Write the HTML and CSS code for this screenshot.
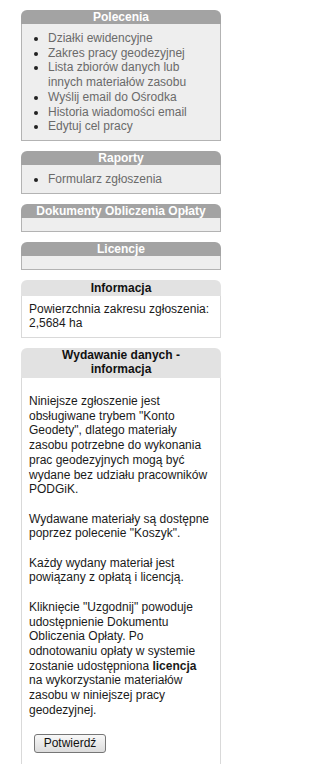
FILE: index.html
```html
<!DOCTYPE html>
<html lang="pl">
<head>
<meta charset="utf-8">
<title>Panel</title>
<link rel="stylesheet" href="styles.css">
</head>
<body>
<div class="sidebar">
  <div class="box">
    <div class="box-head">Polecenia</div>
    <div class="box-body">
      <ul class="menu">
        <li><a href="#">Działki ewidencyjne</a></li>
        <li><a href="#">Zakres pracy geodezyjnej</a></li>
        <li><a href="#">Lista zbiorów danych lub innych materiałów zasobu</a></li>
        <li><a href="#">Wyślij email do Ośrodka</a></li>
        <li><a href="#">Historia wiadomości email</a></li>
        <li><a href="#">Edytuj cel pracy</a></li>
      </ul>
    </div>
  </div>

  <div class="box">
    <div class="box-head">Raporty</div>
    <div class="box-body">
      <ul class="menu">
        <li><a href="#">Formularz zgłoszenia</a></li>
      </ul>
    </div>
  </div>

  <div class="box">
    <div class="box-head">Dokumenty Obliczenia Opłaty</div>
    <div class="box-body empty"></div>
  </div>

  <div class="box">
    <div class="box-head">Licencje</div>
    <div class="box-body empty"></div>
  </div>

  <div class="box info">
    <div class="info-head">Informacja</div>
    <div class="info-body">Powierzchnia zakresu zgłoszenia: 2,5684 ha</div>
  </div>

  <div class="box info">
    <div class="info-head wide">Wydawanie danych - informacja</div>
    <div class="info-body long">
      <p>Niniejsze zgłoszenie jest obsługiwane trybem "Konto Geodety", dlatego materiały zasobu potrzebne do wykonania prac geodezyjnych mogą być wydane bez udziału pracowników PODGiK.</p>
      <p>Wydawane materiały są dostępne poprzez polecenie "Koszyk".</p>
      <p>Każdy wydany materiał jest powiązany z opłatą i licencją.</p>
      <p>Kliknięcie "Uzgodnij" powoduje udostępnienie Dokumentu Obliczenia Opłaty. Po odnotowaniu opłaty w systemie<br><span>zostanie udostępniona</span> <b>licencja</b><br>na wykorzystanie materiałów zasobu w niniejszej pracy geodezyjnej.</p>
      <div class="actions"><button class="btn" type="button">Potwierdź</button></div>
    </div>
  </div>
</div>
</body>
</html>
```

FILE: styles.css
```css
html, body {
  margin: 0;
  padding: 0;
  background: #ffffff;
}

body {
  font-family: "Liberation Sans", Arial, sans-serif;
  font-size: 12px;
  line-height: 14.7px;
  color: #1a1a1a;
}

.sidebar {
  width: 200px;
  margin-left: 21px;
  padding-top: 10px;
}

.box {
  margin-bottom: 10px;
}

.box-head {
  height: 14px;
  line-height: 14px;
  background: #a3a3a3;
  color: #ffffff;
  font-weight: bold;
  text-align: center;
  border-radius: 6px 6px 0 0;
  white-space: nowrap;
}

.box-body {
  background: #eeeeee;
  border: 1px solid #b3b3b3;
  border-top: none;
  padding: 7px 0 6px;
}

.box-body.empty {
  height: 13px;
  padding: 0;
}

.menu {
  margin: 0;
  padding: 0 8px 0 26px;
  list-style: disc;
  color: #222222;
}

.menu a {
  color: #6a6a6a;
  text-decoration: none;
}

.info-head {
  background: #e2e2e2;
  color: #111111;
  font-weight: bold;
  text-align: center;
  border-radius: 6px 6px 0 0;
  padding: 1px 0;
  line-height: 14px;
}

.info-head.wide {
  padding: 0 15px 2px;
}

.info-body {
  background: #ffffff;
  border: 1px solid #d9d9d9;
  border-top: none;
  padding: 6px 7px 6px;
}

.info-body.long {
  padding: 16px 7px 40px;
}

.info-body p {
  margin: 0 0 14.7px;
}

.actions {
  padding-top: 2px;
  padding-left: 5px;
}

.btn {
  font-family: "Liberation Sans", Arial, sans-serif;
  font-size: 12px;
  line-height: 15px;
  color: #111111;
  height: 19px;
  width: 72px;
  padding: 0;
  border: 1px solid #767676;
  border-radius: 3px;
  background: linear-gradient(#f8f8f8, #dcdcdc);
}
```
